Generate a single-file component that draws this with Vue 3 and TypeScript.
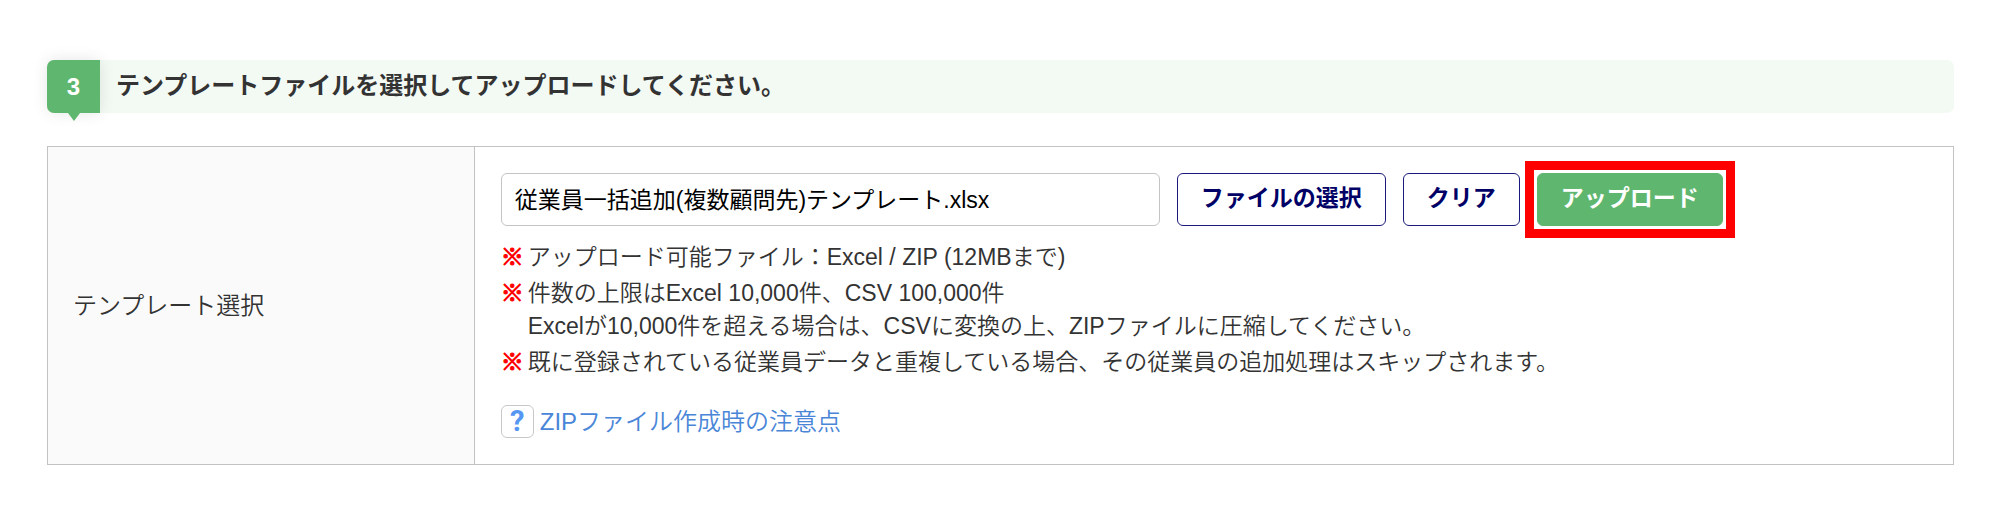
<script setup lang="ts">
import { ref } from 'vue'

interface Note {
  lines: string[]
}

const fileName = ref('従業員一括追加(複数顧問先)テンプレート.xlsx')

const notes: Note[] = [
  { lines: ['アップロード可能ファイル：Excel / ZIP (12MBまで)'] },
  {
    lines: [
      '件数の上限はExcel 10,000件、CSV 100,000件',
      'Excelが10,000件を超える場合は、CSVに変換の上、ZIPファイルに圧縮してください。',
    ],
  },
  { lines: ['既に登録されている従業員データと重複している場合、その従業員の追加処理はスキップされます。'] },
]

function clearFile(): void {
  fileName.value = ''
}
</script>

<template>
  <main class="page">
    <header class="step">
      <span class="step-number">3</span>
      <h2 class="step-title">テンプレートファイルを選択してアップロードしてください。</h2>
    </header>

    <table class="form">
      <tbody>
        <tr>
          <th scope="row"><label for="template-file">テンプレート選択</label></th>
          <td>
            <div class="controls">
              <input id="template-file" v-model="fileName" class="file-name" type="text" readonly />
              <button type="button" class="btn">ファイルの選択</button>
              <button type="button" class="btn" @click="clearFile">クリア</button>
              <div class="highlight">
                <button type="button" class="btn btn-primary">アップロード</button>
              </div>
            </div>
            <ul class="notes">
              <li v-for="(note, i) in notes" :key="i">
                <span class="mark">※</span>
                <div>
                  <p v-for="line in note.lines" :key="line">{{ line }}</p>
                </div>
              </li>
            </ul>
            <a href="#" class="help"><span class="help-icon">?</span>ZIPファイル作成時の注意点</a>
          </td>
        </tr>
      </tbody>
    </table>
  </main>
</template>

<style>
body {
  background: #fff;
}
</style>

<style scoped>
.page {
  padding: 60px 46px 44px 47px;
  font-family: "Liberation Sans", "Noto Sans CJK JP", sans-serif;
  font-size: 23px;
  font-weight: 350;
  line-height: 33px;
  color: #333;
}

.step {
  display: flex;
  height: 53px;
  border-radius: 7px;
  background: #f3faf4;
}

.step-number {
  position: relative;
  flex: none;
  display: flex;
  align-items: center;
  justify-content: center;
  width: 53px;
  border-radius: 7px 0 0 7px;
  background: #5fb76f;
  box-shadow: 0 0 16px rgba(0, 0, 0, 0.1);
  color: #fff;
  font-size: 24px;
  font-weight: 700;
}

.step-number::after {
  content: "";
  position: absolute;
  top: 100%;
  left: 50%;
  margin-left: -6px;
  border: solid transparent;
  border-width: 8px 6px 0;
  border-top-color: #5fb76f;
}

.step-title {
  margin: 0;
  padding: 8px 16px;
  font-size: 24px;
  font-weight: 700;
  line-height: 36px;
}

.form {
  width: 100%;
  margin-top: 33px;
  border: 1px solid #c2c2c2;
  border-spacing: 0;
  box-sizing: border-box;
}

.form th {
  width: 22.4%;
  box-sizing: border-box;
  padding: 0 25px;
  border-right: 1px solid #c2c2c2;
  background: #fafafa;
  font-size: 24px;
  font-weight: inherit;
  text-align: left;
}

.form td {
  padding: 26px;
}

.controls {
  display: flex;
  gap: 17px;
}

.file-name {
  flex: 0 1 659px;
  min-width: 0;
  height: 53px;
  box-sizing: border-box;
  padding: 0 13px 4px;
  border: 1px solid #c4c4c4;
  border-radius: 6px;
  background: #fff;
  color: #000;
  font: inherit;
  font-weight: 400;
}

.btn {
  flex: none;
  height: 53px;
  box-sizing: border-box;
  padding: 0 23px 2px;
  border: 1px solid #1a1a7c;
  border-radius: 6px;
  background: #fff;
  color: #000066;
  font: inherit;
  font-weight: 700;
  white-space: nowrap;
}

.btn-primary {
  border-color: #5fb76f;
  background: #5fb76f;
  color: #fff;
}

.highlight {
  position: relative;
  display: flex;
}

.highlight::after {
  content: "";
  position: absolute;
  inset: -12px;
  border: 9px solid #f00;
  pointer-events: none;
}

.notes {
  display: flex;
  flex-direction: column;
  gap: 3px;
  margin: 15px 0 26px;
  padding: 0;
  list-style: none;
}

.notes li {
  display: flex;
  gap: 4px;
}

.notes p {
  margin: 0;
}

.mark {
  color: #f00;
  font-weight: 700;
  -webkit-text-stroke: 1px #f00;
}

.help {
  display: flex;
  align-items: center;
  gap: 6px;
  width: fit-content;
  color: #4a86d8;
  font-size: 24px;
  text-decoration: none;
}

.help-icon {
  display: flex;
  align-items: center;
  justify-content: center;
  width: 33px;
  height: 33px;
  box-sizing: border-box;
  border: 1px solid #c8c8c8;
  border-radius: 6px;
  color: #5496f2;
  font-family: Roboto, sans-serif;
  font-size: 29px;
  font-weight: 700;
}
</style>
